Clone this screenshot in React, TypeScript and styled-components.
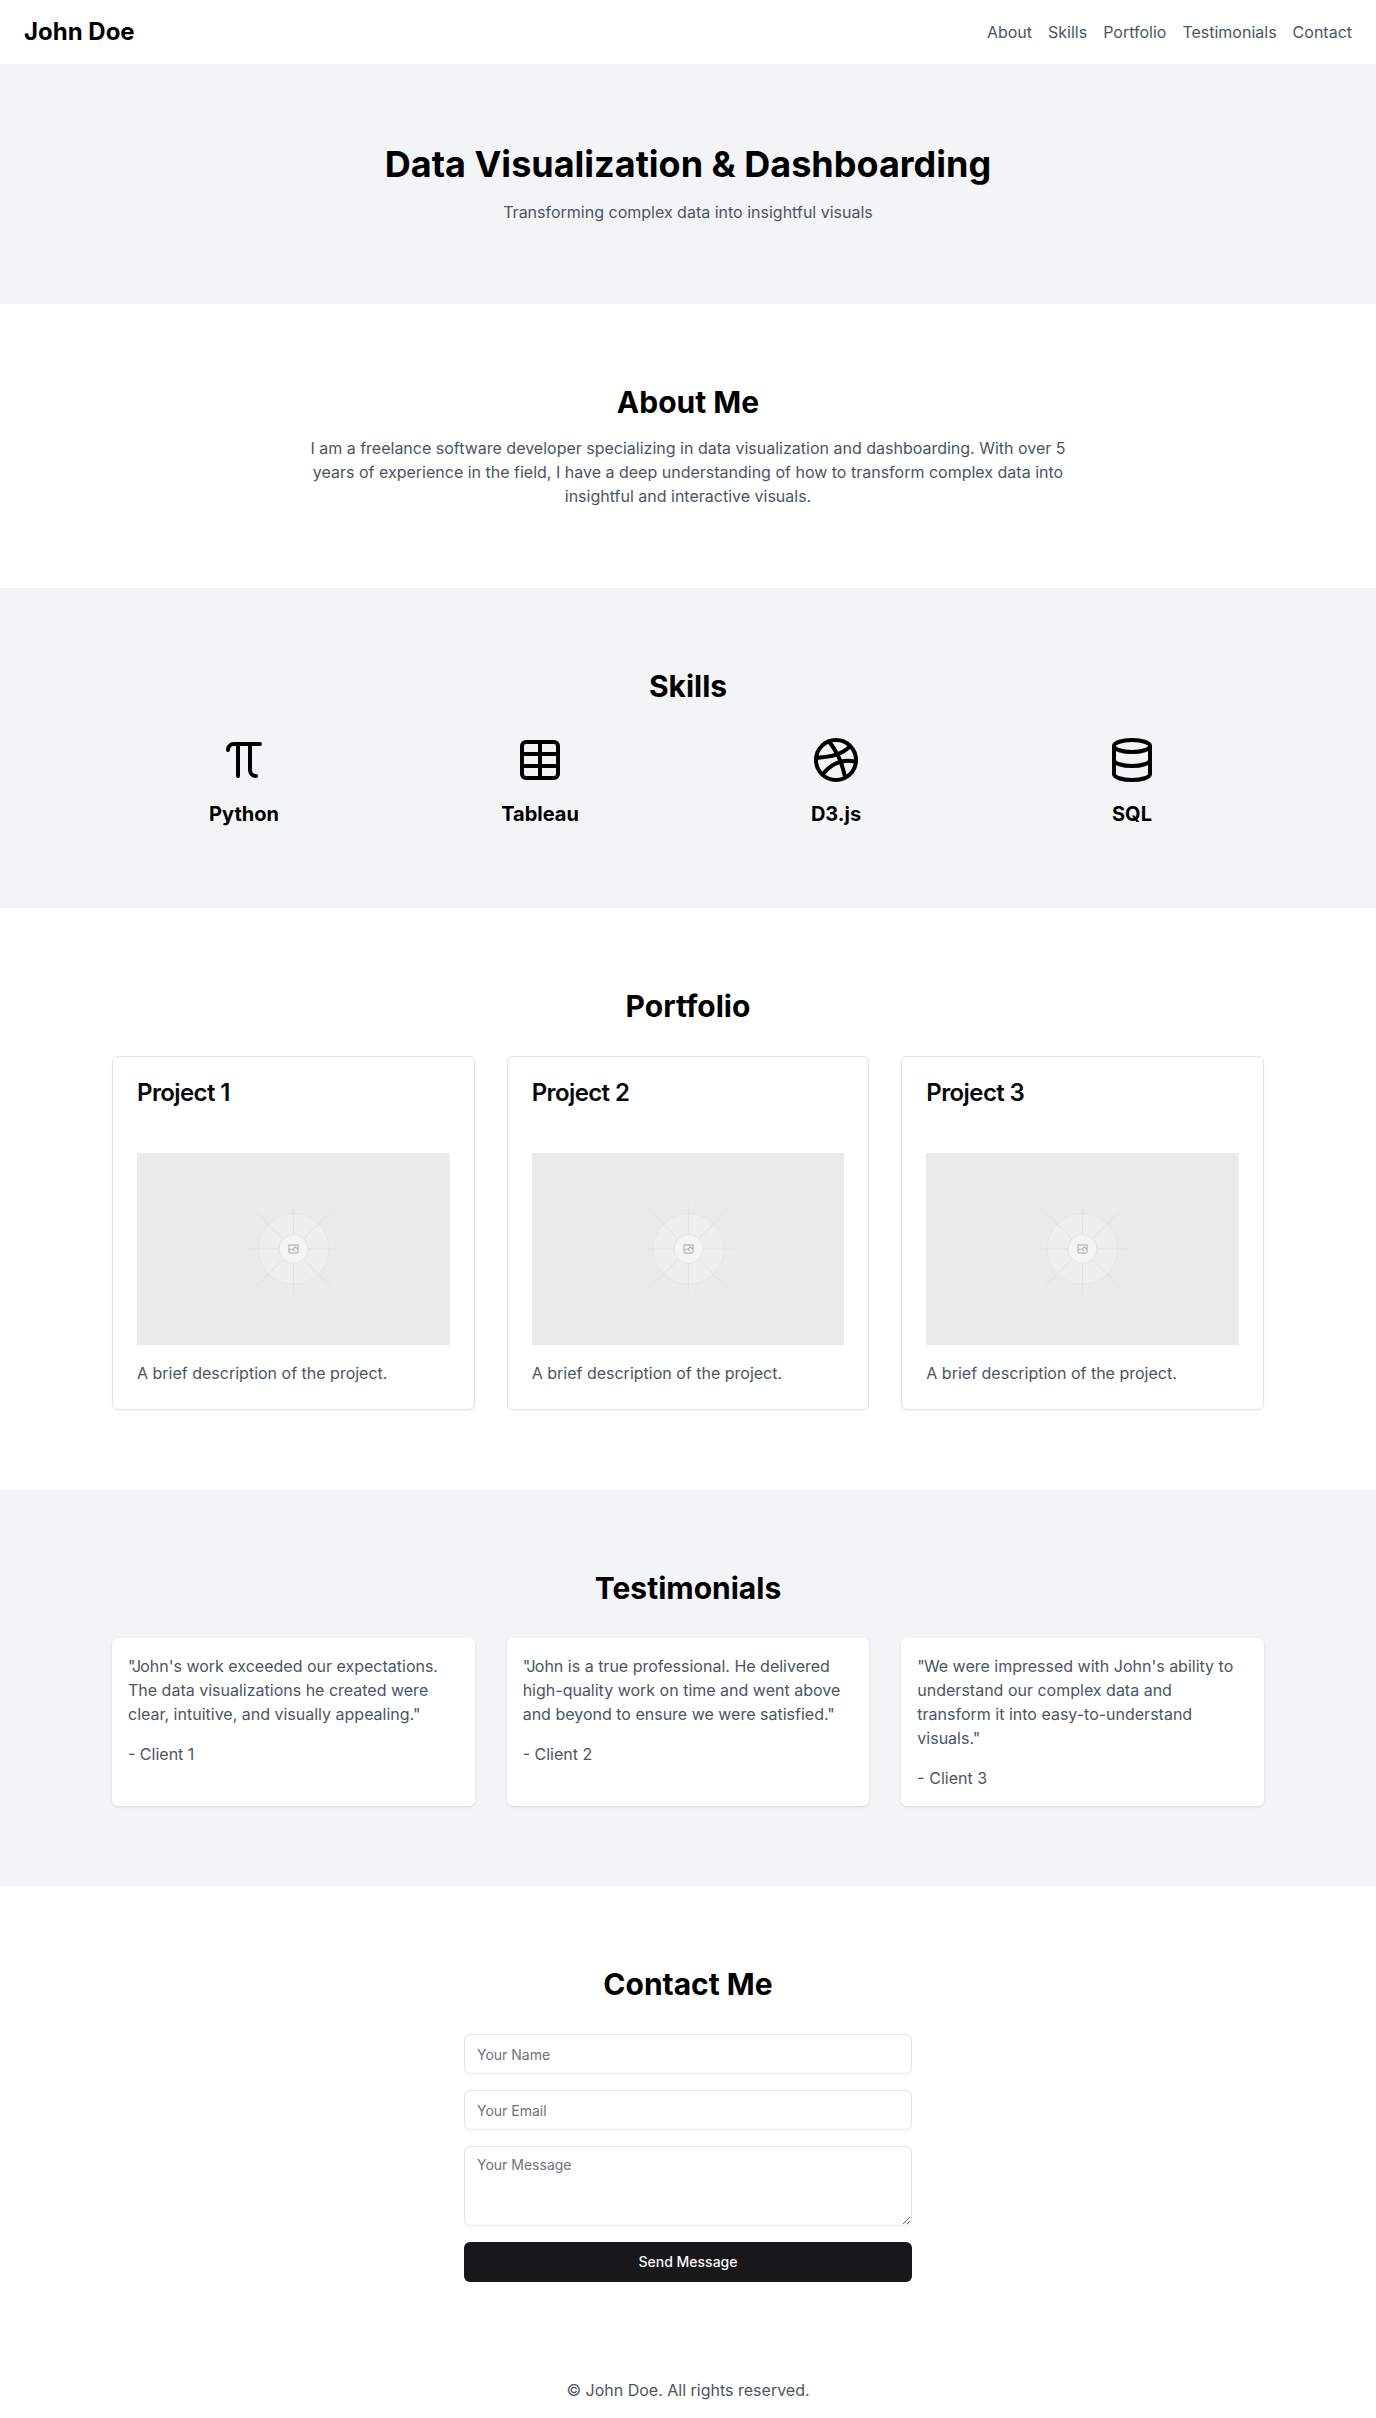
import React from "react";
import styled, { createGlobalStyle } from "styled-components";
import { Database, Dribbble, Pi, Table } from "lucide-react";

const GlobalStyle = createGlobalStyle`
  *, *::before, *::after {
    box-sizing: border-box;
  }
  body {
    margin: 0;
    background: #fff;
    color: #000;
    font-family: Inter, "Liberation Sans", sans-serif;
    font-size: 16px;
    line-height: 24px;
  }
  h1, h2, h3, p {
    margin: 0;
  }
`;

const Header = styled.header`
  display: flex;
  align-items: center;
  justify-content: space-between;
  padding: 16px 24px;
`;

const Brand = styled.div`
  font-size: 24px;
  line-height: 32px;
  font-weight: 700;
`;

const Nav = styled.nav`
  display: flex;
  gap: 16px;
`;

const NavLink = styled.a`
  color: #4b5563;
  text-decoration: none;
`;

const Section = styled.section<{ $shaded?: boolean }>`
  padding: 80px 0;
  background: ${(p) => (p.$shaded ? "#f3f4f6" : "#fff")};
`;

const HeroTitle = styled.h1`
  margin-bottom: 16px;
  text-align: center;
  font-size: 36px;
  line-height: 40px;
  font-weight: 700;
`;

const Heading = styled.h2<{ $gap?: number }>`
  margin-bottom: ${(p) => p.$gap ?? 32}px;
  text-align: center;
  font-size: 30px;
  line-height: 36px;
  font-weight: 700;
`;

const Copy = styled.p`
  color: #4b5563;
`;

const Lead = styled(Copy)`
  max-width: 768px;
  margin: 0 auto;
  text-align: center;
`;

const Grid = styled.div<{ $columns: number }>`
  display: grid;
  grid-template-columns: repeat(${(p) => p.$columns}, minmax(0, 1fr));
  gap: 32px;
  max-width: 1152px;
  margin: 0 auto;
`;

const Skill = styled.div`
  display: flex;
  flex-direction: column;
  align-items: center;
  gap: 16px;
`;

const SkillName = styled.h3`
  font-size: 20px;
  line-height: 28px;
  font-weight: 700;
`;

const ProjectCard = styled.article`
  border: 1px solid #e4e4e7;
  border-radius: 6px;
  background: #fff;
  box-shadow: 0 1px 2px rgba(0, 0, 0, 0.05);
`;

const ProjectHeader = styled.div`
  padding: 24px;
`;

const ProjectTitle = styled.h3`
  color: #09090b;
  font-size: 24px;
  line-height: 24px;
  font-weight: 600;
  letter-spacing: -0.6px;
`;

const ProjectBody = styled.div`
  display: flex;
  flex-direction: column;
  gap: 16px;
  padding: 24px;
`;

const Thumbnail = styled.svg`
  display: block;
  width: 100%;
  height: 192px;
`;

const Testimonial = styled.article`
  display: flex;
  flex-direction: column;
  gap: 16px;
  padding: 16px;
  border-radius: 6px;
  background: #fff;
  box-shadow: 0 1px 3px rgba(0, 0, 0, 0.1), 0 1px 2px -1px rgba(0, 0, 0, 0.1);
`;

/* Tucks the opening quotation mark against the first word. */
const Quote = styled(Copy)`
  &::first-letter {
    letter-spacing: -0.9px;
  }
`;

const Form = styled.form`
  display: flex;
  flex-direction: column;
  gap: 16px;
  max-width: 448px;
  margin: 0 auto;
`;

const Input = styled.input`
  width: 100%;
  height: 40px;
  padding: 8px 12px;
  border: 1px solid #e4e4e7;
  border-radius: 6px;
  background: #fff;
  font: 400 14px/20px Inter, "Liberation Sans", sans-serif;
  &::placeholder {
    color: #71717a;
    opacity: 1;
  }
`;

const TextArea = styled(Input).attrs({ as: "textarea" })`
  display: block;
  height: 80px;
  resize: vertical;
`;

const SubmitButton = styled.button`
  height: 40px;
  padding: 8px 16px;
  border: 0;
  border-radius: 6px;
  background: #18181b;
  color: #fafafa;
  font: 500 14px/20px Inter, "Liberation Sans", sans-serif;
`;

const Footer = styled.footer`
  padding: 16px 0;
  text-align: center;
`;

const rays = [
  { id: "h", x1: 404.8, y1: 599.9, x2: 796.6, y2: 599.9 },
  { id: "v", x1: 600.7, y1: 795.7, x2: 600.7, y2: 404 },
  { id: "up", x1: 404.5, y1: 796.1, x2: 795.9, y2: 404.7 },
  { id: "down", x1: 795.7, y1: 796.6, x2: 404.3, y2: 405.2 },
];

function Placeholder({ name }: { name: string }) {
  return (
    <Thumbnail viewBox="0 0 1200 1200" preserveAspectRatio="xMidYMid slice" fill="none">
      <defs>
        {rays.map(({ id, ...ends }) => (
          <linearGradient key={id} id={`${name}-${id}`} gradientUnits="userSpaceOnUse" {...ends}>
            <stop stopColor="#c9c9c9" stopOpacity="0" />
            <stop offset=".208" stopColor="#c9c9c9" />
            <stop offset=".792" stopColor="#c9c9c9" />
            <stop offset="1" stopColor="#c9c9c9" stopOpacity="0" />
          </linearGradient>
        ))}
      </defs>
      <rect width="1200" height="1200" fill="#eaeaea" />
      <g opacity=".5">
        <g opacity=".5">
          <circle cx="600.7" cy="599.9" r="136.6" fill="#fafafa" />
          <circle cx="600.7" cy="599.9" r="135.4" stroke="#c9c9c9" strokeWidth="2.418" />
        </g>
        {rays.map(({ id, ...ends }) => (
          <line key={id} {...ends} stroke={`url(#${name}-${id})`} strokeWidth="2.418" />
        ))}
        <circle cx="600.7" cy="599.9" r="56.8" fill="#fff" />
        <path
          fill="#666"
          fillRule="evenodd"
          d="M616.426 586.58h-31.434v16.176l3.553-3.554.531-.531h9.068l.074-.074 8.463-8.463h2.565l7.18 7.181V586.58Zm-15.715 14.654 3.698 3.699 1.283 1.282-2.565 2.565-1.282-1.283-5.2-5.199h-6.066l-5.514 5.514-.073.073v2.876a2.418 2.418 0 0 0 2.418 2.418h26.598a2.418 2.418 0 0 0 2.418-2.418v-8.317l-8.463-8.463-7.181 7.181-.071.072Zm-19.347 5.442v4.085a6.045 6.045 0 0 0 6.046 6.045h26.598a6.044 6.044 0 0 0 6.045-6.045v-7.108l1.356-1.355-1.282-1.283-.074-.073v-17.989h-38.689v23.43l-.146.146.146.147Z"
        />
        <circle cx="600.7" cy="599.9" r="55.6" stroke="#c9c9c9" strokeWidth="2.418" />
      </g>
    </Thumbnail>
  );
}

const sections = ["About", "Skills", "Portfolio", "Testimonials", "Contact"];

const skills = [
  { name: "Python", Icon: Pi },
  { name: "Tableau", Icon: Table },
  { name: "D3.js", Icon: Dribbble },
  { name: "SQL", Icon: Database },
];

const testimonials = [
  {
    quote:
      "\"John's work exceeded our expectations. The data visualizations he created were clear, intuitive, and visually appealing.\"",
    author: "- Client 1",
  },
  {
    quote:
      '"John is a true professional. He delivered high-quality work on time and went above and beyond to ensure we were satisfied."',
    author: "- Client 2",
  },
  {
    quote:
      "\"We were impressed with John's ability to understand our complex data and transform it into easy-to-understand visuals.\"",
    author: "- Client 3",
  },
];

export default function App() {
  return (
    <>
      <GlobalStyle />
      <Header>
        <Brand>John Doe</Brand>
        <Nav>
          {sections.map((s) => (
            <NavLink key={s} href={`#${s.toLowerCase()}`}>
              {s}
            </NavLink>
          ))}
        </Nav>
      </Header>
      <main>
        <Section $shaded>
          <HeroTitle>Data Visualization &amp; Dashboarding</HeroTitle>
          <Lead>Transforming complex data into insightful visuals</Lead>
        </Section>
        <Section id="about">
          <Heading $gap={16}>About Me</Heading>
          <Lead>
            I am a freelance software developer specializing in data visualization and dashboarding. With over 5 years
            of experience in the field, I have a deep understanding of how to transform complex data into insightful
            and interactive visuals.
          </Lead>
        </Section>
        <Section id="skills" $shaded>
          <Heading>Skills</Heading>
          <Grid $columns={4}>
            {skills.map(({ name, Icon }) => (
              <Skill key={name}>
                <Icon size={48} />
                <SkillName>{name}</SkillName>
              </Skill>
            ))}
          </Grid>
        </Section>
        <Section id="portfolio">
          <Heading>Portfolio</Heading>
          <Grid $columns={3}>
            {[1, 2, 3].map((n) => (
              <ProjectCard key={n}>
                <ProjectHeader>
                  <ProjectTitle>Project {n}</ProjectTitle>
                </ProjectHeader>
                <ProjectBody>
                  <Placeholder name={`project-${n}`} />
                  <Copy>A brief description of the project.</Copy>
                </ProjectBody>
              </ProjectCard>
            ))}
          </Grid>
        </Section>
        <Section id="testimonials" $shaded>
          <Heading>Testimonials</Heading>
          <Grid $columns={3}>
            {testimonials.map((t) => (
              <Testimonial key={t.author}>
                <Quote>{t.quote}</Quote>
                <Copy>{t.author}</Copy>
              </Testimonial>
            ))}
          </Grid>
        </Section>
        <Section id="contact">
          <Heading>Contact Me</Heading>
          <Form>
            <Input placeholder="Your Name" />
            <Input type="email" placeholder="Your Email" />
            <TextArea placeholder="Your Message" />
            <SubmitButton type="button">Send Message</SubmitButton>
          </Form>
        </Section>
      </main>
      <Footer>
        <Copy>© John Doe. All rights reserved.</Copy>
      </Footer>
    </>
  );
}
